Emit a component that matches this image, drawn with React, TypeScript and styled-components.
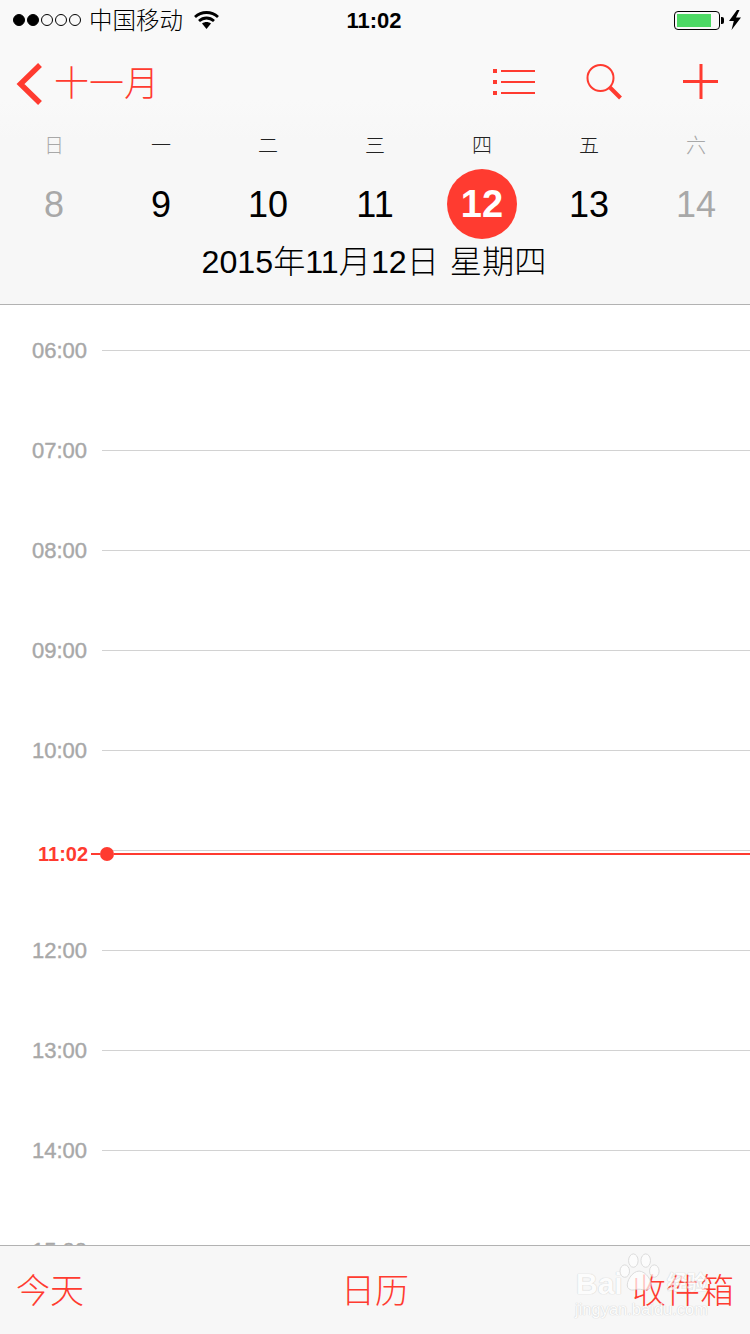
import * as React from "react";
import styled, { createGlobalStyle } from "styled-components";

const RED = "#ff3b30";
const FONT = `"Liberation Sans", "Noto Sans CJK SC", sans-serif`;

const Global = createGlobalStyle`
  html, body {
    margin: 0;
    padding: 0;
    background: #fff;
  }
  * {
    box-sizing: border-box;
  }
`;

const S = {
  Page: styled.div`
    width: 750px;
    height: 1334px;
    display: flex;
    flex-direction: column;
    overflow: hidden;
    font-family: ${FONT};
    background: #fff;
  `,
  Header: styled.header`
    height: 305px;
    flex: none;
    border-bottom: 1px solid #b2b2b2;
    background: linear-gradient(#f9f9f9 0, #f9f9f9 100px, #f7f7f7 140px);
  `,
  StatusBar: styled.div`
    height: 40px;
    padding: 0 9px 0 13px;
    display: grid;
    grid-template-columns: 1fr auto 1fr;
    align-items: center;
    color: #000;
  `,
  StatusLeft: styled.div`
    display: flex;
    align-items: center;
  `,
  Signal: styled.div`
    display: flex;
    gap: 2px;
    margin-right: 8px;
  `,
  Dot: styled.span<{ $on?: boolean }>`
    width: 12px;
    height: 12px;
    border-radius: 50%;
    border: 1px solid #000;
    background: ${(p) => (p.$on ? "#000" : "transparent")};
  `,
  Carrier: styled.span`
    font-size: 23.5px;
    line-height: 30px;
    margin: 1px 11px 0 0;
    font-weight: 300;
  `,
  Clock: styled.span`
    font-size: 22px;
    font-weight: 700;
    line-height: 30px;
    margin-right: 6px;
    padding-top: 1px;
  `,
  StatusRight: styled.div`
    display: flex;
    align-items: center;
    justify-content: flex-end;
    gap: 7px;
  `,
  Battery: styled.div`
    position: relative;
    width: 46px;
    height: 19px;
    padding: 2px;
    border: 1px solid #000;
    border-radius: 4px;
    margin-right: 2px;
    &::after {
      content: "";
      position: absolute;
      right: -5px;
      top: 5px;
      width: 3px;
      height: 7px;
      background: #000;
      border-radius: 0 2px 2px 0;
    }
  `,
  BatteryFill: styled.div`
    width: 34px;
    height: 100%;
    background: #4cd964;
  `,
  Nav: styled.nav`
    height: 85px;
    padding: 3px 31px 0 16px;
    display: flex;
    align-items: center;
    color: ${RED};
  `,
  Back: styled.div`
    display: flex;
    align-items: center;
    gap: 12px;
    margin-right: auto;
  `,
  BackLabel: styled.span`
    font-size: 35px;
    line-height: 42px;
    font-weight: 300;
  `,
  NavIcons: styled.div`
    display: flex;
    align-items: center;
    gap: 50px;
    margin-bottom: 5px;
    svg:last-child {
      margin-left: 11px;
    }
  `,
  WeekGrid: styled.div`
    display: grid;
    grid-template-columns: repeat(7, 107px);
    padding-left: 0.5px;
  `,
  WeekDay: styled.div<{ $off?: boolean }>`
    height: 44px;
    padding-top: 9px;
    text-align: center;
    font-size: 20px;
    line-height: 24px;
    font-weight: 300;
    color: ${(p) => (p.$off ? "#a8a8a8" : "#222")};
  `,
  DayCell: styled.div`
    height: 70px;
    display: flex;
    justify-content: center;
  `,
  Day: styled.div<{ $off?: boolean; $today?: boolean }>`
    width: 70px;
    height: 70px;
    padding-top: 1px;
    border-radius: 50%;
    display: flex;
    align-items: center;
    justify-content: center;
    font-size: ${(p) => (p.$today ? 38 : 36)}px;
    font-weight: ${(p) => (p.$today ? 700 : 400)};
    color: ${(p) => (p.$today ? "#fff" : p.$off ? "#a8a8a8" : "#000")};
    background: ${(p) => (p.$today ? RED : "transparent")};
  `,
  DateLine: styled.div`
    height: 44px;
    padding: 1px 2px 0 0;
    text-align: center;
    font-size: 32.2px;
    line-height: 44px;
    word-spacing: 2px;
    color: #000;
    font-weight: 300;
  `,
  Timeline: styled.main`
    flex: 1;
    min-height: 0;
    overflow: hidden;
  `,
  HourRow: styled.div`
    position: relative;
    height: 100px;
    padding: 30px 0 0 32px;
    display: flex;
  `,
  HourLabel: styled.span`
    width: 70px;
    flex: none;
    font-size: 22px;
    font-weight: 400;
    line-height: 32px;
    color: #a8a8a8;
    -webkit-text-stroke: 0.4px #a8a8a8;
  `,
  HourLine: styled.div`
    flex: 1;
    height: 1px;
    margin-top: 15px;
    background: #d2d2d2;
  `,
  NowMarker: styled.div`
    position: absolute;
    top: 42px;
    left: 38px;
    right: 0;
    height: 14px;
    display: flex;
    align-items: center;
    color: ${RED};
  `,
  NowLabel: styled.span`
    font-size: 20px;
    font-weight: 700;
    line-height: 14px;
  `,
  NowDash: styled.span`
    width: 9px;
    height: 2px;
    margin: 0 0 0 3px;
    background: ${RED};
  `,
  NowDot: styled.span`
    width: 14px;
    height: 14px;
    flex: none;
    border-radius: 50%;
    background: ${RED};
  `,
  NowLine: styled.span`
    flex: 1;
    height: 2px;
    background: ${RED};
  `,
  Footer: styled.footer`
    position: relative;
    height: 89px;
    flex: none;
    padding: 2px 16px 0;
    display: grid;
    grid-template-columns: 1fr auto 1fr;
    align-items: center;
    border-top: 1px solid #b2b2b2;
    background: #f7f7f7;
    color: ${RED};
  `,
  FooterItem: styled.span<{ $align?: string }>`
    font-size: 34px;
    line-height: 80px;
    font-weight: 300;
    text-align: ${(p) => p.$align || "left"};
  `,
  Watermark: styled.div`
    position: absolute;
    left: 575px;
    top: 7px;
    width: 160px;
    height: 76px;
    color: #fff;
    opacity: 0.7;
    text-shadow: 0 0 1px #c4c4c4, 0 0 1px #c4c4c4;
  `,
  MarkBrand: styled.span`
    position: absolute;
    left: 1px;
    top: 13px;
    font-size: 30px;
    line-height: 36px;
    font-weight: 700;
  `,
  MarkWords: styled.span`
    position: absolute;
    left: 92px;
    top: 14px;
    font-size: 20px;
    line-height: 32px;
    font-weight: 700;
  `,
  MarkUrl: styled.span`
    position: absolute;
    left: 0;
    top: 46px;
    font-size: 16.5px;
    line-height: 20px;
    white-space: nowrap;
  `,
  MarkPaw: styled.svg`
    position: absolute;
    left: 44px;
    top: 0;
  `
};

const ChevronIcon = () => (
  <svg width="26" height="42" viewBox="0 0 26 42" style={{ display: "block" }}>
    <path d="M24 2 L4.5 21 L24 40" fill="none" stroke={RED} strokeWidth="5.5" />
  </svg>
);

const ListIcon = () => (
  <svg width="43" height="26" viewBox="0 0 43 26" style={{ display: "block" }}>
    <g fill={RED}>
      <rect x="0" y="0" width="4" height="4" />
      <rect x="0" y="11" width="4" height="4" />
      <rect x="0" y="22" width="4" height="4" />
      <rect x="8" y="1" width="34" height="2" />
      <rect x="8" y="12" width="34" height="2" />
      <rect x="8" y="23" width="34" height="2" />
    </g>
  </svg>
);

const SearchIcon = () => (
  <svg width="36" height="36" viewBox="0 0 36 36" style={{ display: "block" }}>
    <circle cx="14.5" cy="14" r="13" fill="none" stroke={RED} strokeWidth="2" />
    <path d="M24 23.5 L34.5 34" fill="none" stroke={RED} strokeWidth="4" />
  </svg>
);

const PlusIcon = () => (
  <svg width="36" height="36" viewBox="0 0 36 36" style={{ display: "block" }}>
    <path d="M18 0 V35 M0 17.5 H35" fill="none" stroke={RED} strokeWidth="3" />
  </svg>
);

const WifiIcon = () => (
  <svg width="25" height="18" viewBox="0 0 25 18" style={{ display: "block" }}>
    <path
      d="M1 6 C7.5 0 17.5 0 24 6 M5 10 C9.5 6 15.5 6 20 10"
      fill="none"
      stroke="#000"
      strokeWidth="2.8"
    />
    <path d="M8 12.5 C10.5 10.5 14.5 10.5 17 12.5 L12.5 18 Z" fill="#000" />
  </svg>
);

const BoltIcon = () => (
  <svg width="12" height="20" viewBox="0 0 12 20" style={{ display: "block" }}>
    <path d="M8 0 L0 11 H4.8 L2.5 20 L12 7.5 H7 L10.5 0 Z" fill="#000" />
  </svg>
);

const PawIcon = () => (
  <S.MarkPaw width="42" height="40" viewBox="0 0 44 42">
    <g fill="#fff" stroke="#cfcfcf" strokeWidth="1">
      <ellipse cx="6" cy="19" rx="5" ry="6.5" />
      <ellipse cx="15" cy="8" rx="5" ry="7" />
      <ellipse cx="28" cy="8" rx="5" ry="7" />
      <ellipse cx="37" cy="19" rx="5" ry="6.5" />
      <path d="M21 19 C28 19 36 30 33 36 C30 41 25 38 21 38 C17 38 12 41 9 36 C7 30 14 19 21 19 Z" />
    </g>
  </S.MarkPaw>
);

const weekDays = [
  { label: "日", day: 8, off: true },
  { label: "一", day: 9 },
  { label: "二", day: 10 },
  { label: "三", day: 11 },
  { label: "四", day: 12, today: true },
  { label: "五", day: 13 },
  { label: "六", day: 14, off: true }
];

const hours = ["06:00", "07:00", "08:00", "09:00", "10:00", "", "12:00", "13:00", "14:00", "15:00"];

const App: React.FC = () => {
  return (
    <S.Page>
      <Global />
      <S.Header>
        <S.StatusBar>
          <S.StatusLeft>
            <S.Signal>
              <S.Dot $on />
              <S.Dot $on />
              <S.Dot />
              <S.Dot />
              <S.Dot />
            </S.Signal>
            <S.Carrier>中国移动</S.Carrier>
            <WifiIcon />
          </S.StatusLeft>
          <S.Clock>11:02</S.Clock>
          <S.StatusRight>
            <S.Battery>
              <S.BatteryFill />
            </S.Battery>
            <BoltIcon />
          </S.StatusRight>
        </S.StatusBar>
        <S.Nav>
          <S.Back>
            <ChevronIcon />
            <S.BackLabel>十一月</S.BackLabel>
          </S.Back>
          <S.NavIcons>
            <ListIcon />
            <SearchIcon />
            <PlusIcon />
          </S.NavIcons>
        </S.Nav>
        <S.WeekGrid>
          {weekDays.map((d) => (
            <S.WeekDay key={d.label} $off={d.off}>
              {d.label}
            </S.WeekDay>
          ))}
          {weekDays.map((d) => (
            <S.DayCell key={d.day}>
              <S.Day $off={d.off} $today={d.today}>
                {d.day}
              </S.Day>
            </S.DayCell>
          ))}
        </S.WeekGrid>
        <S.DateLine>2015年11月12日 星期四</S.DateLine>
      </S.Header>
      <S.Timeline>
        {hours.map((h, i) => (
          <S.HourRow key={i}>
            <S.HourLabel>{h}</S.HourLabel>
            <S.HourLine />
            {h === "" && (
              <S.NowMarker>
                <S.NowLabel>11:02</S.NowLabel>
                <S.NowDash />
                <S.NowDot />
                <S.NowLine />
              </S.NowMarker>
            )}
          </S.HourRow>
        ))}
      </S.Timeline>
      <S.Footer>
        <S.FooterItem>今天</S.FooterItem>
        <S.FooterItem>日历</S.FooterItem>
        <S.FooterItem $align="right">收件箱</S.FooterItem>
        <S.Watermark>
          <S.MarkBrand>Bai</S.MarkBrand>
          <PawIcon />
          <S.MarkWords>经验</S.MarkWords>
          <S.MarkUrl>jingyan.baidu.com</S.MarkUrl>
        </S.Watermark>
      </S.Footer>
    </S.Page>
  );
};

export default App;
